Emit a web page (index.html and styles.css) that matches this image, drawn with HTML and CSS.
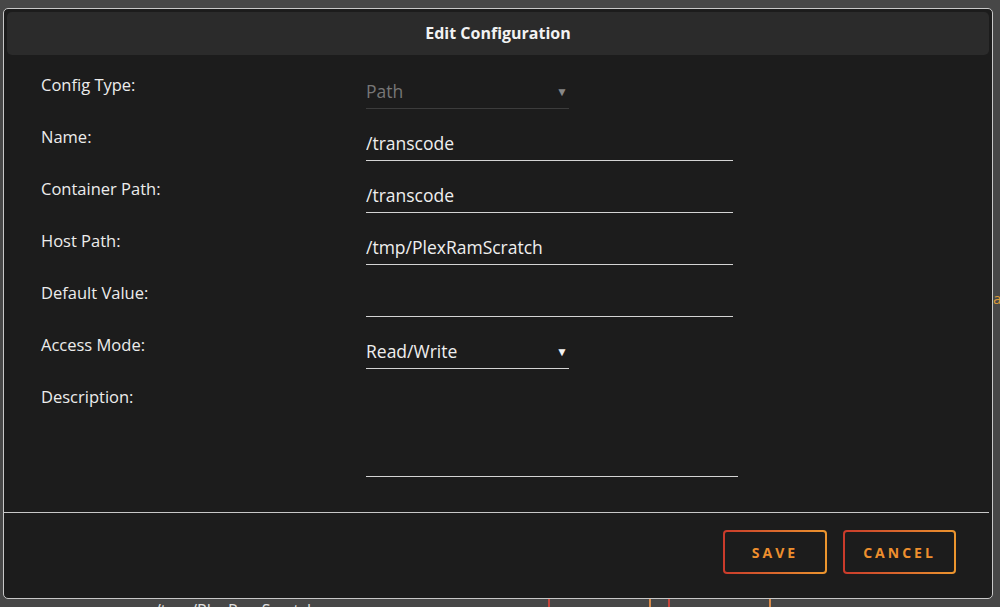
FILE: index.html
```html
<!DOCTYPE html>
<html lang="en">
<head>
    <meta charset="UTF-8">
    <meta name="viewport" content="width=device-width, initial-scale=1.0">
    <title>Edit Configuration</title>
    <link rel="stylesheet" href="styles.css">
</head>
<body>
    <div class="page">
        <div class="page-row">
            <span class="page-path">/tmp/PlexRamScratch</span>
            <span class="page-btn"></span>
            <span class="page-btn"></span>
            <span class="page-side">a</span>
        </div>
    </div>

    <div class="dialog">
        <div class="dialog-header">Edit Configuration</div>
        <form class="dialog-form">
            <label for="type">Config Type:</label>
            <div class="select select-disabled">
                <span>Path</span>
                <span class="arrow">&#9660;</span>
            </div>

            <label for="name">Name:</label>
            <input type="text" id="name" class="field" value="/transcode">

            <label for="target">Container Path:</label>
            <input type="text" id="target" class="field" value="/transcode">

            <label for="host">Host Path:</label>
            <input type="text" id="host" class="field" value="/tmp/PlexRamScratch">

            <label for="default">Default Value:</label>
            <input type="text" id="default" class="field" value="">

            <label for="mode">Access Mode:</label>
            <div class="select">
                <span>Read/Write</span>
                <span class="arrow">&#9660;</span>
            </div>

            <label for="desc">Description:</label>
            <textarea id="desc" class="field area"></textarea>
        </form>
        <div class="dialog-footer">
            <button type="button" class="btn btn-save">Save</button>
            <button type="button" class="btn btn-cancel">Cancel</button>
        </div>
    </div>
</body>
</html>
```

FILE: styles.css
```css
body {
    margin: 0;
    padding: 0;
    height: 607px;
    overflow: hidden;
    background-color: #474747;
    font-family: "Open Sans", "Noto Sans", sans-serif;
    color: #e0e0e0;
}
.page {
    padding-top: 598px;
}
.page-row {
    display: flex;
    align-items: flex-start;
    height: 20px;
}
.page-path {
    width: 393px;
    margin-left: 155px;
    margin-top: 1px;
    font-size: 16px;
    color: #e0e0e0;
}
.page-btn {
    box-sizing: border-box;
    width: 103px;
    height: 20px;
    margin-right: 17px;
    border-left: 2px solid #c4463e;
    border-right: 2px solid #d6894a;
}
.page-side {
    margin-left: auto;
    margin-top: -310px;
    font-size: 15px;
    color: #d99a3a;
    width: 7px;
    overflow: hidden;
}
.dialog {
    position: fixed;
    top: 8px;
    left: 3px;
    width: 988px;
    height: 589px;
    background-color: #1c1c1c;
    border: 1px solid #c8c8c8;
    border-radius: 5px;
}
.dialog-header {
    margin: 3px 3px 0 3px;
    height: 43px;
    line-height: 43px;
    background-color: #2b2b2b;
    border-radius: 5px;
    text-align: center;
    font-weight: bold;
    font-size: 16px;
    color: #f2f2f2;
}
.dialog-form {
    display: grid;
    grid-template-columns: 325px 1fr;
    grid-auto-rows: 52px;
    padding: 10px 0 0 37px;
    height: 447px;
}
.dialog-form label {
    margin-top: 10px;
    line-height: 20px;
    font-size: 16.5px;
    color: #ececec;
}
.field {
    box-sizing: border-box;
    width: 367px;
    height: 32px;
    margin-top: 12px;
    padding: 0 0 3px 0;
    background: transparent;
    border: none;
    border-bottom: 1px solid #d4d4d4;
    font-family: inherit;
    font-size: 17.5px;
    color: #efefef;
    outline: none;
}
.field.area {
    width: 372px;
    height: 88px;
    resize: none;
}
.select {
    box-sizing: border-box;
    display: flex;
    justify-content: space-between;
    align-items: center;
    width: 203px;
    height: 32px;
    margin-top: 12px;
    padding: 0 1px 3px 0;
    border-bottom: 1px solid #d4d4d4;
    font-size: 17.5px;
    color: #efefef;
}
.select-disabled {
    color: #777;
    border-bottom-color: #3c3c3c;
}
.arrow {
    font-size: 12px;
    color: #f2f2f2;
}
.select-disabled .arrow {
    color: #888;
}
.dialog-footer {
    margin: 0 3px 0 0;
    border-top: 1px solid #c8c8c8;
    display: flex;
    justify-content: flex-end;
    gap: 16px;
    padding: 17px 33px 0 0;
}
.btn {
    width: 104px;
    height: 44px;
    border: 2px solid transparent;
    border-radius: 4px;
    background: linear-gradient(#1c1c1c, #1c1c1c) padding-box,
                linear-gradient(90deg, #c93a2b, #ec962e) border-box;
    font-family: inherit;
    font-weight: bold;
    font-size: 14px;
    letter-spacing: 3px;
    text-transform: uppercase;
    color: #ee8f2e;
    cursor: pointer;
}
.btn-cancel {
    width: 113px;
}
```
